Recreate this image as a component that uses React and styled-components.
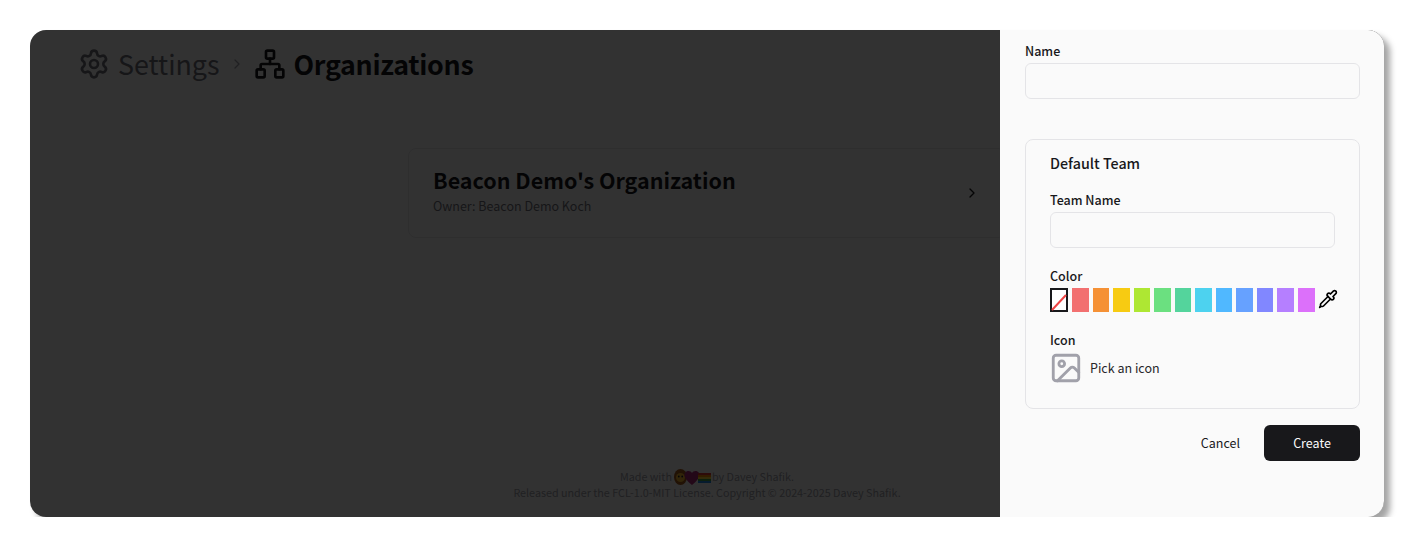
import React from "react";
import styled, { createGlobalStyle } from "styled-components";
import { Settings, Network, ChevronRight, Pipette, Image as ImageIcon } from "lucide-react";

const Global = createGlobalStyle`
  html, body { margin: 0; padding: 0; background: #fff; }
  body { padding: 30px 42px 0 30px; font-family: "Noto Sans CJK SC", "Noto Sans", sans-serif; color: #18181b; }
  * { box-sizing: border-box; }
`;

const Frame = styled.div`
  position: relative;
  height: 487px;
  border-radius: 16px;
  background: #fafafa;
  box-shadow: 6px 6px 6px rgba(0, 0, 0, 0.36);
`;
const Clip = styled.div`
  position: relative;
  height: 100%;
  border-radius: 16px;
  overflow: hidden;
`;
const Page = styled.div`
  height: 100%;
  display: flex;
  flex-direction: column;
  align-items: center;
  padding: 14px 0 16px;
`;
const Crumbs = styled.header`
  align-self: flex-start;
  display: flex;
  align-items: center;
  height: 40px;
  margin-left: 48px;
  font-size: 26.8px;
  line-height: 40px;
`;
const CrumbMuted = styled.span`
  color: #71717a;
  margin-left: 8px;
`;
const CrumbStrong = styled.span`
  font-weight: 600;
  letter-spacing: -0.3px;
  margin-left: 8px;
  color: #18181b;
`;
const Sep = styled.span`
  display: flex;
  margin: 0 9px;
  color: #a1a1aa;
`;
const OrgCard = styled.div`
  width: 598px;
  height: 90px;
  margin-top: 64px;
  padding: 0 24px;
  display: flex;
  align-items: center;
  justify-content: space-between;
  border: 1px solid #e4e4e7;
  border-radius: 8px;
`;
const OrgInfo = styled.div`
  padding-bottom: 5px;
`;
const OrgTitle = styled.div`
  font-size: 21.5px;
  line-height: 30px;
  font-weight: 700;
`;
const OrgOwner = styled.div`
  margin-top: 1px;
  font-size: 12.5px;
  line-height: 20px;
  color: #71717a;
`;
const OrgChevron = styled.span`
  display: flex;
  margin-right: 1px;
  color: #18181b;
`;
const Footer = styled.footer`
  margin-top: auto;
  text-align: center;
  font-size: 10.75px;
  line-height: 16px;
  color: #a1a1aa;
`;
const Emojis = styled.svg`
  display: inline-block;
  vertical-align: -4px;
  margin: 0 0 0 2px;
`;
const Overlay = styled.div`
  position: absolute;
  inset: 0;
  background: rgba(0, 0, 0, 0.8);
`;
const Drawer = styled.aside`
  position: absolute;
  top: 0;
  right: 0;
  bottom: 0;
  width: 384px;
  padding: 13px 24px 0 25px;
  background: #fafafa;
  display: flex;
  flex-direction: column;
`;
const Label = styled.label`
  display: block;
  font-size: 12.5px;
  line-height: 16px;
  font-weight: 500;
  color: #18181b;
  height: 20px;
`;
const Input = styled.input`
  display: block;
  width: 100%;
  height: 36px;
  border: 1px solid #e4e4e7;
  border-radius: 6px;
  background: transparent;
  outline: none;
`;
const Fieldset = styled.section`
  margin-top: 40px;
  height: 270px;
  padding: 16px 24px 0;
  border: 1px solid #e4e4e7;
  border-radius: 8px;
`;
const Legend = styled.h3`
  margin: -1px 0 21px;
  font-size: 14.3px;
  line-height: 16px;
  font-weight: 500;
`;
const Field = styled.div`
  margin-bottom: ${(p) => p.$gap}px;
`;
const Swatches = styled.div`
  display: flex;
  align-items: center;
  gap: 4px;
  height: 24px;
`;
const Swatch = styled.span`
  flex: none;
  width: 16.55px;
  height: 24px;
  background: ${(p) => p.$color};
`;
const NoColor = styled.svg`
  flex: none;
  width: 18px;
  height: 24px;
  display: block;
`;
const Dropper = styled.span`
  flex: none;
  display: flex;
  margin: 0 0 2px -1px;
  color: #000;
`;
const IconPicker = styled.div`
  display: flex;
  align-items: center;
  gap: 7px;
  height: 32px;
  font-size: 12.5px;
  color: #27272a;
`;
const IconBox = styled.span`
  display: flex;
  margin-left: -1px;
  color: #a1a1aa;
`;
const PickText = styled.span`
  margin-top: -2px;
`;
const Actions = styled.div`
  display: flex;
  justify-content: flex-end;
  align-items: center;
  gap: 24px;
  margin-top: 16px;
`;
const CancelButton = styled.button`
  padding: 0;
  border: 0;
  background: none;
  font: inherit;
  font-size: 12.5px;
  line-height: 36px;
  color: #18181b;
`;
const CreateButton = styled.button`
  width: 96px;
  height: 36px;
  padding: 0 0 2px;
  border: 0;
  border-radius: 6px;
  background: #18181b;
  color: #fafafa;
  font: inherit;
  font-size: 12.5px;
`;

const colors = ["#f27070", "#f59135", "#f7cb12", "#aee733", "#6be080", "#54d49c", "#4dd2ef", "#50b8ff", "#66a1ff", "#8187ff", "#b57fff", "#dc70fa"];

export default function App() {
  return (
    <>
      <Global />
      <Frame>
        <Clip>
          <Page>
            <Crumbs>
              <Settings size={32} strokeWidth={2} color="#71717a" />
              <CrumbMuted>Settings</CrumbMuted>
              <Sep><ChevronRight size={16} /></Sep>
              <Network size={32} strokeWidth={2} color="#18181b" />
              <CrumbStrong>Organizations</CrumbStrong>
            </Crumbs>
            <OrgCard>
              <OrgInfo>
                <OrgTitle>Beacon Demo's Organization</OrgTitle>
                <OrgOwner>Owner: Beacon Demo Koch</OrgOwner>
              </OrgInfo>
              <OrgChevron><ChevronRight size={16} /></OrgChevron>
            </OrgCard>
            <Footer>
              <div>
                Made with
                <Emojis width="38" height="16" viewBox="0 0 38 16">
                  <ellipse cx="6.500" cy="8" rx="6.500" ry="8" fill="#a5591a" />
                  <circle cx="6.500" cy="8.500" r="4.500" fill="#f7b733" />
                  <circle cx="4.800" cy="7.500" r="0.900" fill="#222" />
                  <circle cx="8.200" cy="7.500" r="0.900" fill="#222" />
                  <path d="M11 4c2-3 6-2 7 0 1-2 5-3 7 0 2 3.500-2 8-7 12C13 12 9 7.500 11 4z" fill="#b02a78" />
                  <rect x="24" y="4" width="13" height="2" fill="#e53935" />
                  <rect x="24" y="6" width="13" height="2" fill="#fb8c00" />
                  <rect x="24" y="8" width="13" height="2" fill="#fdd835" />
                  <rect x="24" y="10" width="13" height="2" fill="#43a047" />
                  <rect x="24" y="12" width="13" height="2" fill="#1e88e5" />
                </Emojis>
                by Davey Shafik.
              </div>
              <div>Released under the FCL-1.0-MIT License. Copyright © 2024-2025 Davey Shafik.</div>
            </Footer>
          </Page>
          <Overlay />
          <Drawer>
            <Label>Name</Label>
            <Input />
            <Fieldset>
              <Legend>Default Team</Legend>
              <Field $gap={20}>
                <Label>Team Name</Label>
                <Input />
              </Field>
              <Field $gap={20}>
                <Label>Color</Label>
                <Swatches>
                  <NoColor viewBox="0 0 18 24">
                    <rect x="1" y="1" width="16" height="22" fill="#fff" stroke="#18181b" strokeWidth="2" />
                    <line x1="2" y1="22" x2="16" y2="7" stroke="#ef4444" strokeWidth="2" />
                  </NoColor>
                  {colors.map((c) => <Swatch key={c} $color={c} />)}
                  <Dropper><Pipette size={20} /></Dropper>
                </Swatches>
              </Field>
              <Field $gap={0}>
                <Label>Icon</Label>
                <IconPicker>
                  <IconBox><ImageIcon size={34} strokeWidth={2} /></IconBox>
                  <PickText>Pick an icon</PickText>
                </IconPicker>
              </Field>
            </Fieldset>
            <Actions>
              <CancelButton>Cancel</CancelButton>
              <CreateButton>Create</CreateButton>
            </Actions>
          </Drawer>
        </Clip>
      </Frame>
    </>
  );
}
